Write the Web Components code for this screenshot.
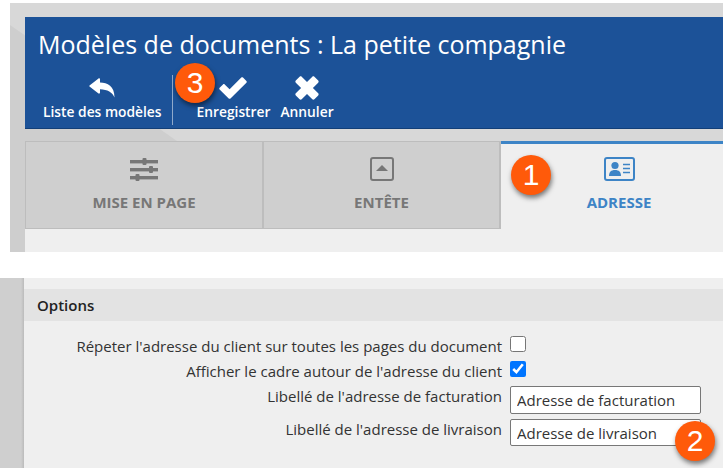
<!DOCTYPE html>
<html lang="fr">
<head>
<meta charset="utf-8">
<title>Modèles de documents</title>
<style>
  html, body { margin: 0; padding: 0; background: #fff; height: 468px; overflow: hidden; }
  body { font-family: "Open Sans", sans-serif; font-size: 15px; color: #222; }
</style>
</head>
<body>
<app-page>
  <top-panel>
    <doc-header title-text="Modèles de documents : La petite compagnie">
      <tool-button label="Liste des modèles" icon="reply"></tool-button>
      <tool-sep></tool-sep>
      <tool-button label="Enregistrer" icon="check"></tool-button>
      <tool-button label="Annuler" icon="times"></tool-button>
    </doc-header>
    <tab-strip>
      <tab-item label="MISE EN PAGE" icon="sliders"></tab-item>
      <tab-item label="ENTÊTE" icon="header"></tab-item>
      <tab-item label="ADRESSE" icon="card" active></tab-item>
    </tab-strip>
  </top-panel>
  <options-panel heading="Options">
    <form-row label="Répeter l'adresse du client sur toutes les pages du document" height="25"><input-check></input-check></form-row>
    <form-row label="Afficher le cadre autour de l'adresse du client" height="25"><input-check checked></input-check></form-row>
    <form-row label="Libellé de l'adresse de facturation" height="33"><text-box value="Adresse de facturation"></text-box></form-row>
    <form-row label="Libellé de l'adresse de livraison" height="33"><text-box value="Adresse de livraison" short></text-box></form-row>
  </options-panel>
  <step-badge n="3" style="left:175px;top:63px"></step-badge>
  <step-badge n="1" style="left:511px;top:155px"></step-badge>
  <step-badge n="2" style="left:675px;top:421px"></step-badge>
</app-page>
<script>
"use strict";
const ICONS = {
  reply: '<svg width="26" height="20" viewBox="0 0 26 20"><path fill="#fff" d="M0.5 7.5 9.5 0.5C10.2 0.1 11 0.5 11 1.4V4.5C18.5 4.8 25.5 8 25.5 19.5C23.5 14.5 18.5 11.5 11 11.3V14.6C11 15.5 10.2 15.9 9.5 15.5L0.5 8.6C0.2 8.3 0.2 7.8 0.5 7.5Z"/></svg>',
  check: '<svg width="28" height="22" viewBox="0 0 28 22"><path fill="#fff" d="M0.6 10.8 4 7.4C4.5 6.9 5.2 6.9 5.7 7.4L10.6 12.3 22.3 0.6C22.8 0.1 23.5 0.1 24 0.6L27.4 4C27.9 4.5 27.9 5.2 27.4 5.7L11.5 21.4C11 21.9 10.2 21.9 9.7 21.4L0.6 12.5C0.1 12 0.1 11.3 0.6 10.8Z"/></svg>',
  times: '<svg width="24" height="24" viewBox="0 0 24 24"><path fill="#fff" d="M4.6 0.8C5.2 0.2 6.1 0.2 6.7 0.8L12 6.1 17.3 0.8C17.9 0.2 18.8 0.2 19.4 0.8L23.2 4.6C23.8 5.2 23.8 6.1 23.2 6.7L17.9 12 23.2 17.3C23.8 17.9 23.8 18.8 23.2 19.4L19.4 23.2C18.8 23.8 17.9 23.8 17.3 23.2L12 17.9 6.7 23.2C6.1 23.8 5.2 23.8 4.6 23.2L0.8 19.4C0.2 18.8 0.2 17.9 0.8 17.3L6.1 12 0.8 6.7C0.2 6.1 0.2 5.2 0.8 4.6Z"/></svg>',
  sliders: '<svg width="28" height="24" viewBox="0 0 28 24"><g fill="currentColor"><rect x="0" y="3" width="28" height="3.4"/><rect x="12.5" y="1" width="4" height="7" rx="1"/><rect x="0" y="11" width="28" height="3.4"/><rect x="19" y="9" width="4" height="7" rx="1"/><rect x="0" y="19" width="28" height="3.4"/><rect x="5.5" y="17" width="4" height="7" rx="1"/></g></svg>',
  header: '<svg width="24" height="24" viewBox="0 0 24 24"><rect x="1" y="1" width="22" height="22" rx="2" fill="none" stroke="currentColor" stroke-width="2"/><path fill="currentColor" d="M12 8 18 14H6Z"/></svg>',
  card: '<svg width="31" height="24" viewBox="0 0 31 24"><rect x="1" y="1" width="29" height="22" rx="2" fill="none" stroke="currentColor" stroke-width="2"/><circle cx="11" cy="8.5" r="3.6" fill="currentColor"/><path fill="currentColor" d="M5 19C5 15 7 13 11 13S17 15 17 19Z"/><path fill="none" stroke="currentColor" stroke-width="1.4" d="M19 7.5H26M19 11.5H26M19 15.5H26"/></svg>'
};

class AppPage extends HTMLElement {
  constructor() {
    super();
    this.attachShadow({ mode: "open" }).innerHTML = `
      <style>
        :host { display: flex; flex-direction: column; position: relative; height: 468px; padding-top: 3px; box-sizing: border-box; }
      </style>
      <slot></slot>`;
  }
}

class TopPanel extends HTMLElement {
  constructor() {
    super();
    this.attachShadow({ mode: "open" }).innerHTML = `
      <style>
        :host { display: flex; flex-direction: column; position: relative; margin-left: 10px; height: 249px; padding: 14px 0 0 15px; box-sizing: border-box; background: #d8d8d8; }
        :host::before { content: ""; position: absolute; inset: 0; background: #cecece; clip-path: polygon(0 22px, 167px 138px, 15px 138px, 15px 249px, 0 249px); }
        .wrap { position: relative; display: flex; flex-direction: column; flex: 1; }
      </style>
      <div class="wrap"><slot></slot></div>`;
  }
}

class DocHeader extends HTMLElement {
  constructor() {
    super();
    this.attachShadow({ mode: "open" }).innerHTML = `
      <style>
        :host { display: block; height: 112px; box-sizing: border-box; background: #1c5298; border-bottom: 1px solid #123f78; color: #fff; padding: 9px 0 0 13px; }
        h1 { margin: 0; font: 400 25px/36px "Open Sans", sans-serif; white-space: nowrap; }
        .bar { display: flex; align-items: flex-start; margin-top: 13px; padding-left: 5px; }
      </style>
      <h1></h1>
      <div class="bar"><slot></slot></div>`;
    this.shadowRoot.querySelector("h1").textContent = this.getAttribute("title-text");
  }
}

class ToolButton extends HTMLElement {
  constructor() {
    super();
    this.attachShadow({ mode: "open" }).innerHTML = `
      <style>
        :host { display: flex; flex-direction: column; align-items: center; margin-right: 10px; color: #fff; }
        .i { height: 26px; display: flex; align-items: center; justify-content: center; }
        .l { font: 600 13.8px/18px "Open Sans", sans-serif; white-space: nowrap; margin-top: 2px; }
      </style>
      <div class="i">${ICONS[this.getAttribute("icon")]}</div>
      <div class="l"></div>`;
    this.shadowRoot.querySelector(".l").textContent = this.getAttribute("label");
  }
}

class ToolSep extends HTMLElement {
  constructor() {
    super();
    this.attachShadow({ mode: "open" }).innerHTML = `
      <style>:host { display: block; width: 1px; height: 50px; background: #8fa9cb; margin: 0 24px 0 0; }</style>`;
  }
}

class TabStrip extends HTMLElement {
  constructor() {
    super();
    this.attachShadow({ mode: "open" }).innerHTML = `
      <style>
        :host { display: grid; grid-template-columns: 239px 237px 236px; margin-top: 12px; flex: 1; background: #efefef; align-items: stretch; }
      </style>
      <slot></slot>`;
  }
}

class TabItem extends HTMLElement {
  constructor() {
    super();
    this.attachShadow({ mode: "open" }).innerHTML = `
      <style>
        :host { display: flex; flex-direction: column; align-items: center; box-sizing: border-box; height: 88px; padding-top: 15px; background: #cfcfcf; color: #777; border: 1px solid #bdbdbd; border-right-width: 2px; border-left: 0; }
        :host(:first-child) { border-left: 1px solid #bdbdbd; }
        :host([active]) { height: 111px; background: #efefef; color: #3d84c6; border: 0; border-top: 3px solid #3d84c6; padding-top: 13px; }
        .i { height: 24px; display: flex; }
        .l { font: 700 15px/20px "Open Sans", sans-serif; margin-top: 11px; white-space: nowrap; }
      </style>
      <div class="i">${ICONS[this.getAttribute("icon")]}</div>
      <div class="l"></div>`;
    this.shadowRoot.querySelector(".l").textContent = this.getAttribute("label");
  }
}

class OptionsPanel extends HTMLElement {
  constructor() {
    super();
    this.attachShadow({ mode: "open" }).innerHTML = `
      <style>
        :host { display: block; margin-top: 26px; height: 190px; box-sizing: border-box; border-left: 24px solid #cfcfcf; background: #efefef; padding-top: 11px; position: relative; }
        :host::before { content: ""; position: absolute; left: -3px; top: 0; bottom: 0; width: 3px; background: linear-gradient(to right, transparent, #bbb); }
        h2 { margin: 0; height: 32px; background: #e3e3e3; font: 600 15px/32px "Open Sans", sans-serif; color: #222; padding-left: 13px; }
        .rows { padding-top: 15px; }
      </style>
      <h2></h2>
      <div class="rows"><slot></slot></div>`;
    this.shadowRoot.querySelector("h2").textContent = this.getAttribute("heading");
  }
}

class FormRow extends HTMLElement {
  constructor() {
    super();
    this.attachShadow({ mode: "open" }).innerHTML = `
      <style>
        :host { display: grid; grid-template-columns: 478px auto; column-gap: 8px; align-items: start; color: #333; }
        .l { text-align: right; font: 400 15px/20px "Open Sans", sans-serif; white-space: nowrap; }
      </style>
      <div class="l"></div>
      <slot></slot>`;
    this.shadowRoot.querySelector(".l").textContent = this.getAttribute("label");
    this.style.height = this.getAttribute("height") + "px";
  }
}

class InputCheck extends HTMLElement {
  constructor() {
    super();
    this.attachShadow({ mode: "open" }).innerHTML = `
      <style>
        :host { display: block; height: 16px; }
        input { display: block; width: 16px; height: 16px; margin: 0; }
      </style>
      <input type="checkbox">`;
    this.shadowRoot.querySelector("input").checked = this.hasAttribute("checked");
  }
}

class TextBox extends HTMLElement {
  constructor() {
    super();
    this.attachShadow({ mode: "open" }).innerHTML = `
      <style>
        :host { display: block; }
        input { display: block; box-sizing: border-box; width: 191px; height: 28px; padding: 1px 6px; border: 1px solid #777; border-radius: 2px; background: #fff; color: #333; font: 400 15px "Open Sans", sans-serif; outline: 0; }
        :host([short]) input { height: 27px; padding: 0 6px; }
      </style>
      <input type="text">`;
    this.shadowRoot.querySelector("input").setAttribute("value", this.getAttribute("value"));
  }
}

class StepBadge extends HTMLElement {
  constructor() {
    super();
    this.attachShadow({ mode: "open" }).innerHTML = `
      <style>
        :host { position: absolute; display: flex; align-items: center; justify-content: center; width: 40px; height: 40px; border-radius: 50%; background: #ff5a0a; color: #fff; font: 400 30px/40px "Liberation Sans", Arial, sans-serif; box-shadow: 1px 3px 5px rgba(0,0,0,.5); }
      </style>
      <span></span>`;
    this.shadowRoot.querySelector("span").textContent = this.getAttribute("n");
  }
}

customElements.define("app-page", AppPage);
customElements.define("top-panel", TopPanel);
customElements.define("doc-header", DocHeader);
customElements.define("tool-button", ToolButton);
customElements.define("tool-sep", ToolSep);
customElements.define("tab-strip", TabStrip);
customElements.define("tab-item", TabItem);
customElements.define("options-panel", OptionsPanel);
customElements.define("form-row", FormRow);
customElements.define("input-check", InputCheck);
customElements.define("text-box", TextBox);
customElements.define("step-badge", StepBadge);
</script>
</body>
</html>
